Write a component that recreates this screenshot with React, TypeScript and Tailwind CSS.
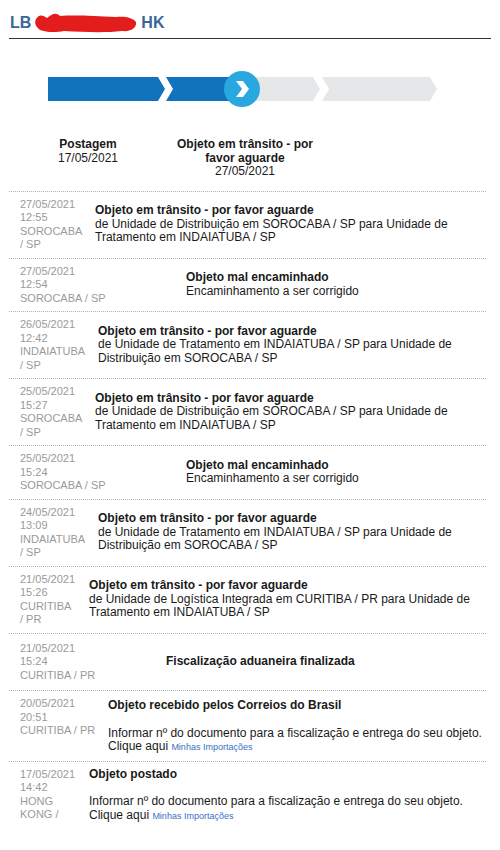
import React from 'react';

type Evento = {
  data: string;
  hora: string;
  local: string;
  titulo: string;
  detalhe?: string;
  importacao?: boolean;
  dateW: string; // tailwind width class
  descPad: string; // tailwind padding-left class
  align?: string;
  extra?: string;
};

const eventos: Evento[] = [
  { data: '27/05/2021', hora: '12:55', local: 'SOROCABA / SP', titulo: 'Objeto em trânsito - por favor aguarde', detalhe: 'de Unidade de Distribuição em SOROCABA / SP para Unidade de Tratamento em INDAIATUBA / SP', dateW: 'w-[66px]', descPad: 'pl-[9px]' },
  { data: '27/05/2021', hora: '12:54', local: 'SOROCABA / SP', titulo: 'Objeto mal encaminhado', detalhe: 'Encaminhamento a ser corrigido', dateW: 'w-[90px]', descPad: 'pl-[76px]' },
  { data: '26/05/2021', hora: '12:42', local: 'INDAIATUBA / SP', titulo: 'Objeto em trânsito - por favor aguarde', detalhe: 'de Unidade de Tratamento em INDAIATUBA / SP para Unidade de Distribuição em SOROCABA / SP', dateW: 'w-[68px]', descPad: 'pl-[10px]' },
  { data: '25/05/2021', hora: '15:27', local: 'SOROCABA / SP', titulo: 'Objeto em trânsito - por favor aguarde', detalhe: 'de Unidade de Distribuição em SOROCABA / SP para Unidade de Tratamento em INDAIATUBA / SP', dateW: 'w-[66px]', descPad: 'pl-[9px]' },
  { data: '25/05/2021', hora: '15:24', local: 'SOROCABA / SP', titulo: 'Objeto mal encaminhado', detalhe: 'Encaminhamento a ser corrigido', dateW: 'w-[90px]', descPad: 'pl-[76px]' },
  { data: '24/05/2021', hora: '13:09', local: 'INDAIATUBA / SP', titulo: 'Objeto em trânsito - por favor aguarde', detalhe: 'de Unidade de Tratamento em INDAIATUBA / SP para Unidade de Distribuição em SOROCABA / SP', dateW: 'w-[68px]', descPad: 'pl-[10px]' },
  { data: '21/05/2021', hora: '15:26', local: 'CURITIBA / PR', titulo: 'Objeto em trânsito - por favor aguarde', detalhe: 'de Unidade de Logística Integrada em CURITIBA / PR para Unidade de Tratamento em INDAIATUBA / SP', dateW: 'w-[54px]', descPad: 'pl-[15px]' },
  { data: '21/05/2021', hora: '15:24', local: 'CURITIBA / PR', titulo: 'Fiscalização aduaneira finalizada', dateW: 'w-[90px]', descPad: 'pl-[56px]', extra: 'py-[8px]' },
  { data: '20/05/2021', hora: '20:51', local: 'CURITIBA / PR', titulo: 'Objeto recebido pelos Correios do Brasil', importacao: true, dateW: 'w-[82px]', descPad: 'pl-[6px] pt-[2px]', align: 'items-start' },
  { data: '17/05/2021', hora: '14:42', local: 'HONG KONG /', titulo: 'Objeto postado', importacao: true, dateW: 'w-[62px]', descPad: 'pl-[7px]', align: 'items-start' },
];

const ProgressBar = () => (
  <svg width="500" height="40" viewBox="0 0 500 40" className="block">
    <polygon points="48,7 158,7 165,19 158,31 48,31" fill="#1273bd" />
    <polygon points="166,7 235,7 235,31 166,31 173,19" fill="#1273bd" />
    <polygon points="256,7 313,7 320,19 313,31 256,31" fill="#e6e7e8" />
    <polygon points="322,7 430,7 437,19 430,31 322,31 329,19" fill="#e6e7e8" />
    <circle cx="242" cy="19" r="18" fill="#29a7df" />
    <polygon points="236,11 243,11 249,19 243,27 236,27 242,19" fill="#ffffff" />
  </svg>
);

const Row = ({ ev }: { ev: Evento }) => (
  <div className={`flex ${ev.align ?? 'items-center'} border-t border-dotted border-[#b0b0b0] ${ev.extra ?? 'py-[6px]'} pl-[11px]`}>
    <div className={`${ev.dateW} shrink-0 text-[11px] leading-[13.5px] text-[#9a9a9a]`}>
      <div>{ev.data}</div>
      <div>{ev.hora}</div>
      <div>{ev.local}</div>
    </div>
    <div className={`${ev.descPad} text-[12px] leading-[13.5px] text-[#1a1a1a]`}>
      <div className="font-bold">{ev.titulo}</div>
      {ev.detalhe && <div>{ev.detalhe}</div>}
      {ev.importacao && (
        <div className="mt-[14px]">
          Informar nº do documento para a fiscalização e entrega do seu objeto.
          <br />
          Clique aqui <span className="text-[9px] text-[#3b6fc4]">Minhas Importações</span>
        </div>
      )}
    </div>
  </div>
);

export default function App() {
  return (
    <div className="w-[500px] h-[850px] bg-white font-['Liberation_Sans',Arial,sans-serif] overflow-hidden">
      {/* Header */}
      <div className="mx-[9px] pt-[12px] border-b border-[#333] pb-[4px] flex items-center">
        <span className="text-[16px] font-bold text-[#3a6699] leading-[20px] pl-px">LB</span>
        <svg width="104" height="22" viewBox="0 0 104 22" className="mx-[3px]">
          <path d="M2,7 C5,2 9,3 13,6 C18,2 22,0 26,4 C40,3 60,4 82,5 C92,4 99,6 102,10 C103,15 98,20 88,19 C70,21 50,20 30,19 C20,21 12,20 6,18 C2,15 0,11 2,7 Z" fill="#e31c1c" />
        </svg>
        <span className="text-[16px] font-bold text-[#3a6699] leading-[20px]">HK</span>
      </div>

      {/* Progress */}
      <div className="mt-[31px]">
        <ProgressBar />
      </div>

      <div className="flex text-[12px] leading-[13.5px] text-[#1a1a1a] mt-[28px]">
        <div className="w-[80px] ml-[48px] text-center">
          <div className="font-bold">Postagem</div>
          <div>17/05/2021</div>
        </div>
        <div className="w-[150px] ml-[42px] text-center">
          <div className="font-bold">Objeto em trânsito - por favor aguarde</div>
          <div>27/05/2021</div>
        </div>
      </div>

      {/* Events */}
      <div className="mx-[9px] mt-[12px] w-[477px]">
        {eventos.map((ev, i) => (
          <Row key={i} ev={ev} />
        ))}
      </div>
    </div>
  );
}
